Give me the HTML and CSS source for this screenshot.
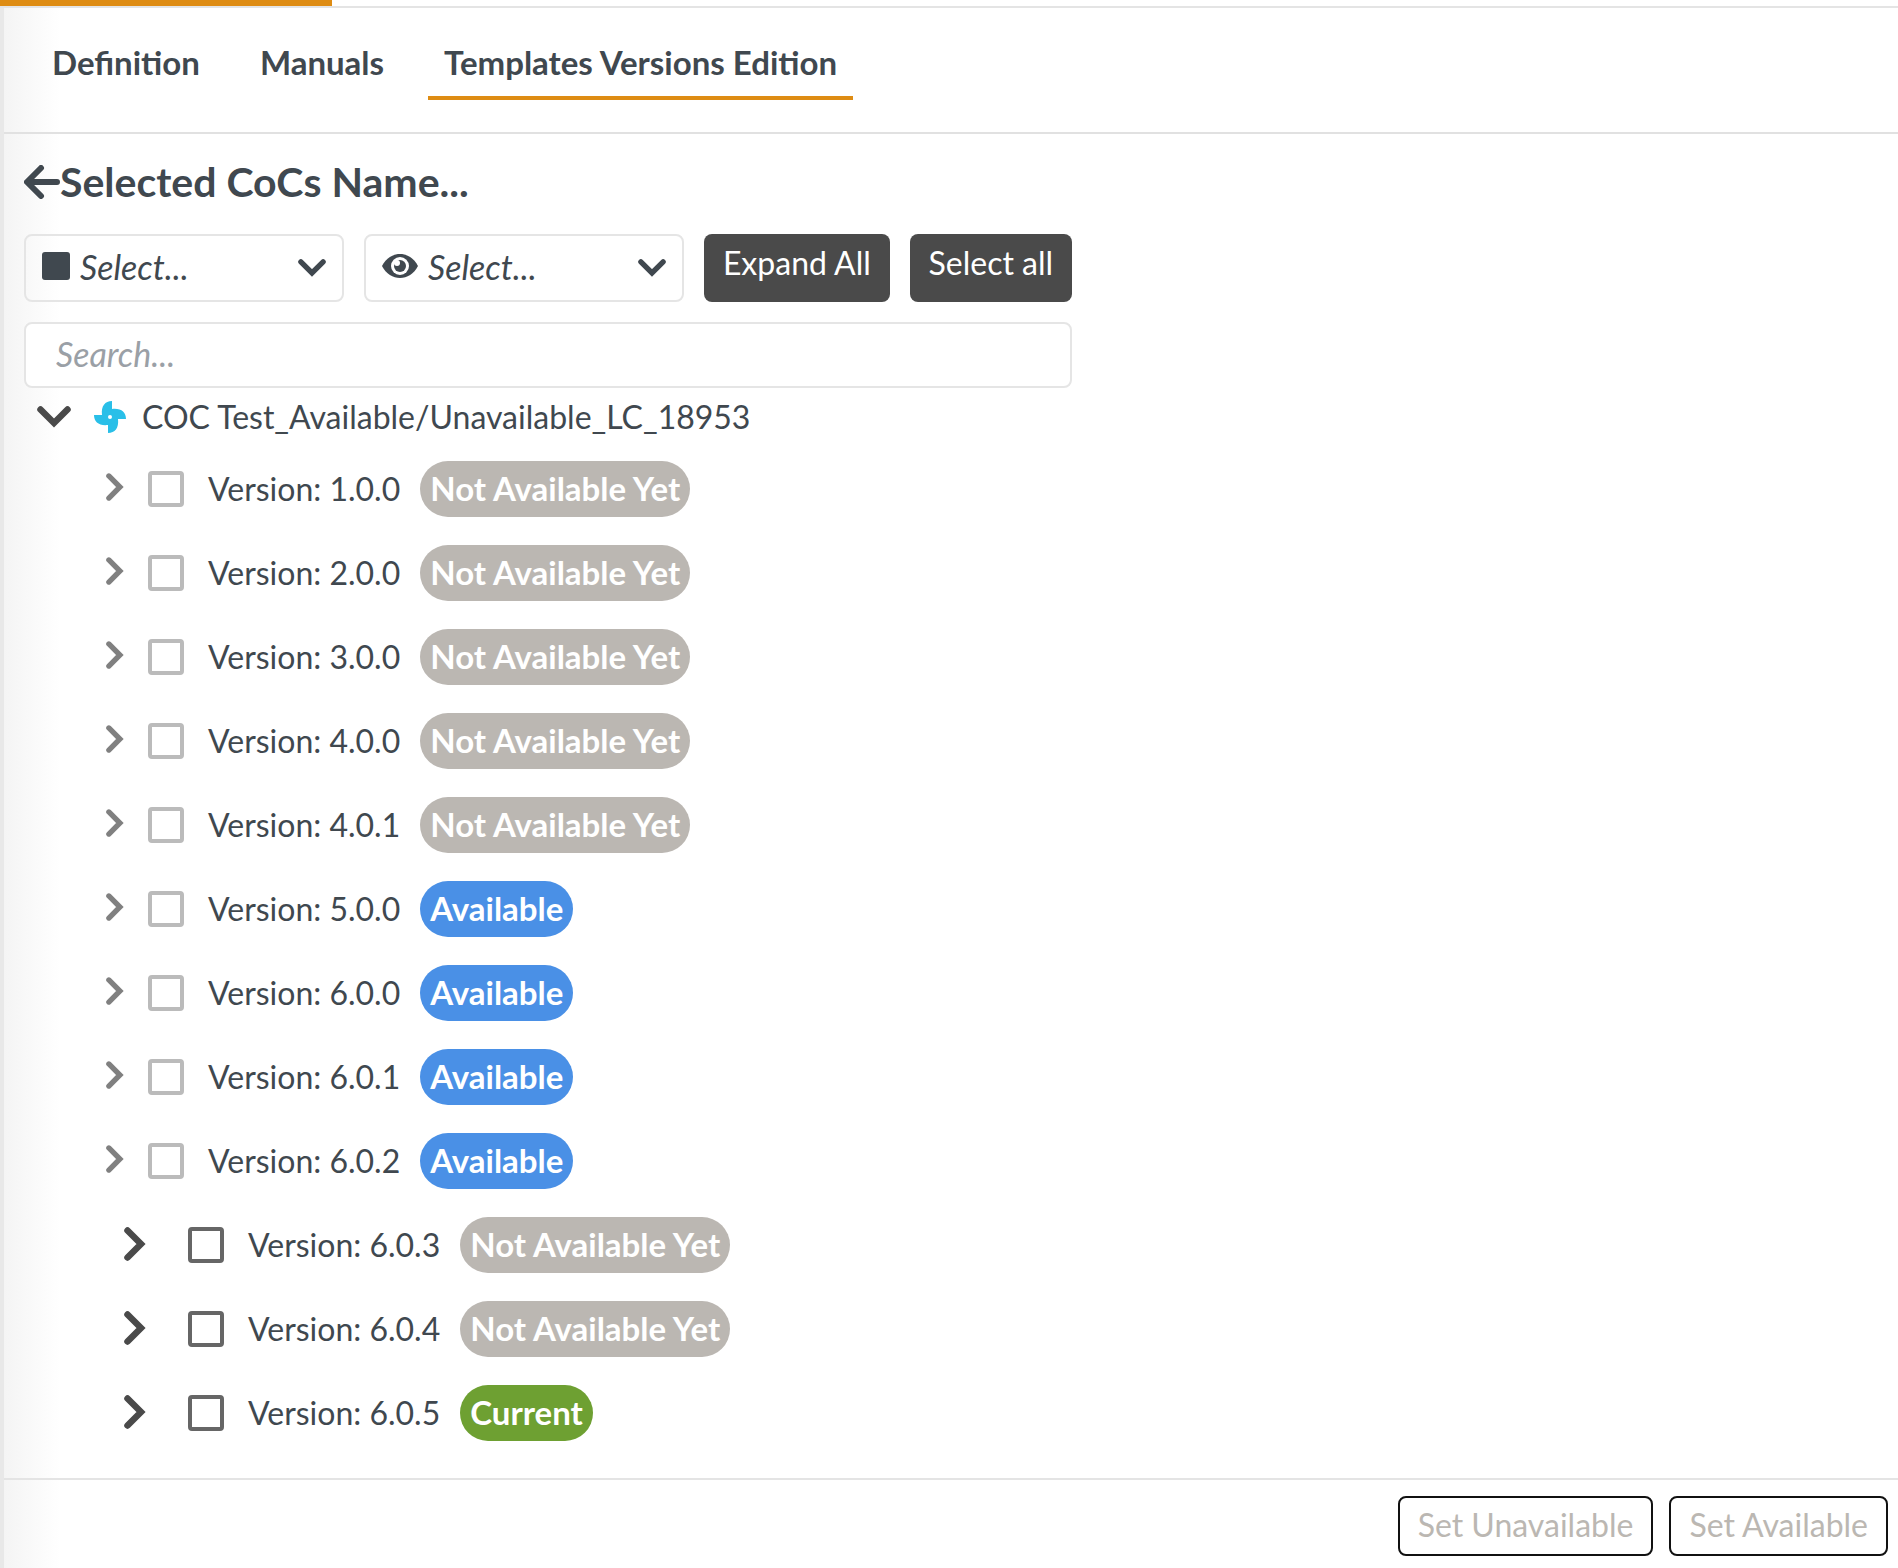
FILE: index.html
```html
<!DOCTYPE html>
<html lang="en">
<head>
    <meta charset="UTF-8">
    <meta name="viewport" content="width=device-width, initial-scale=1.0">
    <title>Templates Versions Edition</title>
    <link rel="stylesheet" href="styles.css">
</head>
<body>
    <!-- shared icons -->
    <svg class="sprite" aria-hidden="true">
        <symbol id="chevron-down" viewBox="0 0 34 22"><path d="M3.5 3.5 17 17 30.5 3.5" fill="none" stroke="currentColor" stroke-width="6.5" stroke-linecap="round"/></symbol>
        <symbol id="chevron-right" viewBox="0 0 22 34"><path d="M3.5 3.5 17 17 3.5 30.5" fill="none" stroke="currentColor" stroke-width="6.5" stroke-linecap="round"/></symbol>
    </svg>
    <div class="top-bar"><div class="top-bar-active"></div></div>
    <div class="page">
        <nav class="tabs">
            <a class="tab" href="#definition">Definition</a>
            <a class="tab" href="#manuals">Manuals</a>
            <a class="tab active" href="#templates">Templates Versions Edition</a>
        </nav>
        <main class="content">
            <h1 class="title">
                <svg class="icon-back" viewBox="0 0 36 34" aria-hidden="true"><path d="M17 3 3 17l14 14M4 17h29" fill="none" stroke="currentColor" stroke-width="6" stroke-linecap="round" stroke-linejoin="round"/></svg>
                <span>Selected CoCs Name...</span>
            </h1>
            <div class="toolbar">
                <label class="select-box">
                    <svg class="icon-square" viewBox="0 0 28 28" aria-hidden="true"><rect width="28" height="28" rx="3" fill="currentColor"/></svg>
                    <select aria-label="Selection"><option>Select...</option></select>
                    <svg class="icon-caret" aria-hidden="true"><use href="#chevron-down"/></svg>
                </label>
                <label class="select-box">
                    <svg class="icon-eye" viewBox="0 0 36 24" aria-hidden="true">
                        <path d="M0 12C4 4 11 0 18 0s14 4 18 12c-4 8-11 12-18 12S4 20 0 12z" fill="currentColor"/>
                        <circle cx="18" cy="12" r="9" fill="#fff"/>
                        <circle cx="18" cy="12" r="6" fill="currentColor"/>
                        <circle cx="15" cy="9" r="3" fill="#fff"/>
                    </svg>
                    <select aria-label="Visibility"><option>Select...</option></select>
                    <svg class="icon-caret" aria-hidden="true"><use href="#chevron-down"/></svg>
                </label>
                <button class="btn-dark" type="button">Expand All</button>
                <button class="btn-dark" type="button">Select all</button>
            </div>
            <input class="search" type="text" placeholder="Search..." aria-label="Search">
            <div class="root">
                <svg class="root-chevron" aria-hidden="true"><use href="#chevron-down"/></svg>
                <svg class="pinwheel" viewBox="0 0 32 32" aria-hidden="true">
                    <g fill="#29bfe8">
                        <path d="M18 0C11 0 7 5 8 14l8 3 3-5-1-4z"/>
                        <path d="M18 0C11 0 7 5 8 14l8 3 3-5-1-4z" transform="rotate(90 16 16)"/>
                        <path d="M18 0C11 0 7 5 8 14l8 3 3-5-1-4z" transform="rotate(180 16 16)"/>
                        <path d="M18 0C11 0 7 5 8 14l8 3 3-5-1-4z" transform="rotate(270 16 16)"/>
                        <circle cx="16" cy="16" r="7"/>
                    </g>
                    <circle cx="16" cy="16" r="2" fill="#fff"/>
                </svg>
                <span>COC Test_Available/Unavailable_LC_18953</span>
            </div>
            <ul class="versions">
                <li class="version disabled"><svg class="chevron" aria-hidden="true"><use href="#chevron-right"/></svg><label class="version-label"><input type="checkbox" disabled><span>Version: 1.0.0</span></label><span class="badge">Not Available Yet</span></li>
                <li class="version disabled"><svg class="chevron" aria-hidden="true"><use href="#chevron-right"/></svg><label class="version-label"><input type="checkbox" disabled><span>Version: 2.0.0</span></label><span class="badge">Not Available Yet</span></li>
                <li class="version disabled"><svg class="chevron" aria-hidden="true"><use href="#chevron-right"/></svg><label class="version-label"><input type="checkbox" disabled><span>Version: 3.0.0</span></label><span class="badge">Not Available Yet</span></li>
                <li class="version disabled"><svg class="chevron" aria-hidden="true"><use href="#chevron-right"/></svg><label class="version-label"><input type="checkbox" disabled><span>Version: 4.0.0</span></label><span class="badge">Not Available Yet</span></li>
                <li class="version disabled"><svg class="chevron" aria-hidden="true"><use href="#chevron-right"/></svg><label class="version-label"><input type="checkbox" disabled><span>Version: 4.0.1</span></label><span class="badge">Not Available Yet</span></li>
                <li class="version disabled"><svg class="chevron" aria-hidden="true"><use href="#chevron-right"/></svg><label class="version-label"><input type="checkbox" disabled><span>Version: 5.0.0</span></label><span class="badge available">Available</span></li>
                <li class="version disabled"><svg class="chevron" aria-hidden="true"><use href="#chevron-right"/></svg><label class="version-label"><input type="checkbox" disabled><span>Version: 6.0.0</span></label><span class="badge available">Available</span></li>
                <li class="version disabled"><svg class="chevron" aria-hidden="true"><use href="#chevron-right"/></svg><label class="version-label"><input type="checkbox" disabled><span>Version: 6.0.1</span></label><span class="badge available">Available</span></li>
                <li class="version disabled"><svg class="chevron" aria-hidden="true"><use href="#chevron-right"/></svg><label class="version-label"><input type="checkbox" disabled><span>Version: 6.0.2</span></label><span class="badge available">Available</span></li>
                <li class="version"><svg class="chevron" aria-hidden="true"><use href="#chevron-right"/></svg><label class="version-label"><input type="checkbox"><span>Version: 6.0.3</span></label><span class="badge">Not Available Yet</span></li>
                <li class="version"><svg class="chevron" aria-hidden="true"><use href="#chevron-right"/></svg><label class="version-label"><input type="checkbox"><span>Version: 6.0.4</span></label><span class="badge">Not Available Yet</span></li>
                <li class="version"><svg class="chevron" aria-hidden="true"><use href="#chevron-right"/></svg><label class="version-label"><input type="checkbox"><span>Version: 6.0.5</span></label><span class="badge current">Current</span></li>
            </ul>
        </main>
        <footer class="footer">
            <button class="btn-outline" type="button" disabled>Set Unavailable</button>
            <button class="btn-outline" type="button" disabled>Set Available</button>
        </footer>
    </div>
</body>
</html>
```
FILE: styles.css
```css
* {
    box-sizing: border-box;
    margin: 0;
    padding: 0;
}
body {
    display: flex;
    flex-direction: column;
    min-height: 100vh;
    background-color: #fff;
    color: #40484f;
    font-family: Lato, "Liberation Sans", sans-serif;
    font-size: 32px;
    line-height: 40px;
}
button, input, select {
    font: inherit;
    color: inherit;
}
svg {
    display: block;
    flex: none;
}
.sprite {
    position: absolute;
    width: 0;
    height: 0;
}
.top-bar {
    height: 8px;
    border-bottom: 2px solid #e4e4e4;
}
.top-bar-active {
    width: 332px;
    height: 6px;
    background-color: #de8c13;
}
.page {
    display: flex;
    flex-direction: column;
    flex: 1;
    border-left: 4px solid #e8e8e8;
    background: linear-gradient(to right, #f4f4f4, #fff 56px);
}
/* tabs */
.tabs {
    display: flex;
    gap: 28px;
    padding: 32px;
    border-bottom: 2px solid #e1e1e1;
}
.tab {
    height: 60px;
    padding: 2px 16px;
    border-bottom: 4px solid transparent;
    color: inherit;
    font-size: 33px;
    font-weight: bold;
    text-decoration: none;
}
.tab.active {
    border-bottom-color: #de8c13;
}
.content {
    flex: 1;
    padding: 24px 20px 0;
}
.title {
    display: flex;
    align-items: center;
    height: 48px;
    font-size: 41px;
    line-height: 48px;
}
.icon-back {
    width: 36px;
    height: 34px;
}
/* filters */
.toolbar {
    display: flex;
    gap: 20px;
    max-width: 1048px;
    margin-top: 28px;
}
.select-box {
    display: flex;
    align-items: center;
    width: 320px;
    height: 68px;
    padding: 0 16px;
    border: 2px solid #e5e5e5;
    border-radius: 8px;
    background-color: transparent;
}
.select-box select {
    flex: 1;
    min-width: 0;
    height: 60px;
    margin-left: 10px;
    padding-bottom: 2px;
    border: 0;
    background: none;
    font-size: 34px;
    font-style: italic;
    appearance: none;
}
.icon-square {
    width: 28px;
    height: 28px;
    margin-bottom: 4px;
}
.icon-eye {
    width: 36px;
    height: 24px;
    margin-bottom: 4px;
}
.icon-caret {
    width: 28px;
    height: 20px;
}
.btn-dark {
    flex: auto;
    height: 68px;
    padding: 0 16px 10px;
    border: 0;
    border-radius: 8px;
    background-color: #4a4a4a;
    color: #fff;
}
.search {
    display: block;
    width: 100%;
    max-width: 1048px;
    height: 66px;
    margin-top: 20px;
    padding: 0 30px 4px;
    border: 2px solid #e5e5e5;
    border-radius: 8px;
    background-color: #fff;
    font-size: 34px;
    font-style: italic;
}
.search::placeholder {
    color: #9aa0a6;
    opacity: 1;
}
/* tree */
.root {
    display: flex;
    align-items: center;
    height: 59px;
    padding: 0 0 2px 12px;
}
.root-chevron {
    width: 36px;
    height: 22px;
    color: #4a4a4a;
}
.pinwheel {
    width: 32px;
    height: 32px;
    margin: 0 16px 0 22px;
}
.versions {
    list-style: none;
}
.version {
    display: flex;
    align-items: center;
    height: 84px;
    padding-left: 100px;
}
.chevron {
    width: 22px;
    height: 34px;
    margin-bottom: 2px;
    color: #4a4a4a;
}
.version-label {
    display: flex;
    align-items: center;
    gap: 24px;
    margin: 0 20px 0 42px;
}
.version-label input {
    width: 36px;
    height: 36px;
    border: 4px solid #666;
    border-radius: 4px;
    background-color: #fff;
    appearance: none;
}
.disabled {
    padding-left: 82px;
}
.disabled .chevron {
    width: 18px;
    height: 28px;
    margin-bottom: 4px;
    color: #808080;
}
.disabled .version-label {
    margin-left: 24px;
}
.disabled input {
    border-color: #bbb;
}
.badge {
    height: 56px;
    padding: 0 10px;
    border-radius: 28px;
    background-color: #bbb7b2;
    color: #fff;
    font-size: 33px;
    font-weight: bold;
    line-height: 54px;
}
.badge.available {
    background-color: #4a90e6;
}
.badge.current {
    background-color: #6ea032;
}
.footer {
    display: flex;
    justify-content: flex-end;
    gap: 16px;
    padding: 16px 10px 12px;
    border-top: 2px solid #e4e4e4;
}
.btn-outline {
    height: 60px;
    padding: 0 18px 2px;
    border: 2px solid #111;
    border-radius: 8px;
    background-color: transparent;
    color: #bbb7b2;
}
```
